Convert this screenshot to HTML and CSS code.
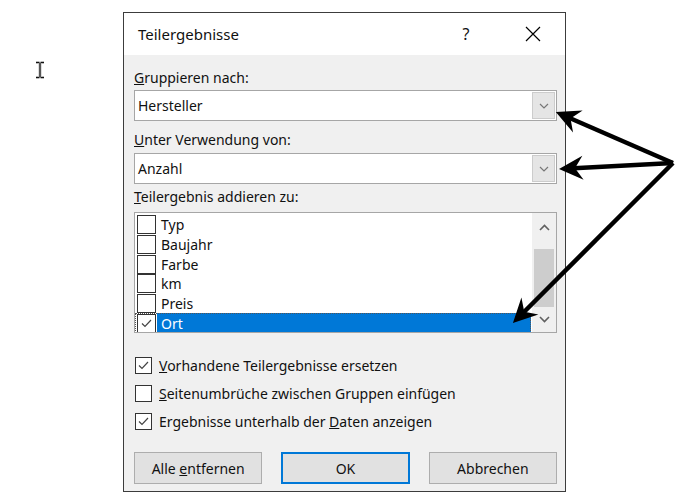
FILE: index.html
```html
<!DOCTYPE html>
<html lang="de">
<head>
    <meta charset="UTF-8">
    <title>Teilergebnisse</title>
    <link rel="stylesheet" href="styles.css">
</head>
<body>
<div class="page">
    <div class="dialog">
        <div class="titlebar">
            <span class="title">Teilergebnisse</span>
            <span class="help">?</span>
            <span class="close">
                <svg width="16" height="16" viewBox="0 0 16 16"><path d="M1 1 L15 15 M15 1 L1 15" stroke="#000" stroke-width="1.2" fill="none"/></svg>
            </span>
        </div>
        <div class="content">
            <div class="label first"><u>G</u>ruppieren nach:</div>
            <div class="combo">
                <span class="combo-text">Hersteller</span>
                <span class="dropbtn"><svg width="10" height="6" viewBox="0 0 10 6"><path d="M1 1 L5 5 L9 1" stroke="#777" stroke-width="1.2" fill="none"/></svg></span>
            </div>
            <div class="label"><u>U</u>nter Verwendung von:</div>
            <div class="combo second">
                <span class="combo-text">Anzahl</span>
                <span class="dropbtn"><svg width="10" height="6" viewBox="0 0 10 6"><path d="M1 1 L5 5 L9 1" stroke="#777" stroke-width="1.2" fill="none"/></svg></span>
            </div>
            <div class="label third"><u>T</u>eilergebnis addieren zu:</div>
            <div class="listbox">
                <div class="items">
                    <div class="item"><span class="box"></span><span class="item-text">Typ</span></div>
                    <div class="item"><span class="box"></span><span class="item-text">Baujahr</span></div>
                    <div class="item"><span class="box"></span><span class="item-text">Farbe</span></div>
                    <div class="item"><span class="box"></span><span class="item-text">km</span></div>
                    <div class="item"><span class="box"></span><span class="item-text">Preis</span></div>
                    <div class="item selected">
                        <span class="box"><svg width="15" height="15" viewBox="0 0 15 15"><path d="M3 7.5 L6 10.5 L12 4" stroke="#444" stroke-width="1.2" fill="none"/></svg></span>
                        <span class="item-text">Ort</span>
                    </div>
                </div>
                <div class="scrollbar">
                    <div class="sb-up"><svg width="11" height="7" viewBox="0 0 11 7"><path d="M1 6 L5.5 1.5 L10 6" stroke="#606060" stroke-width="1.6" fill="none"/></svg></div>
                    <div class="sb-track"><div class="sb-thumb"></div></div>
                    <div class="sb-down"><svg width="11" height="7" viewBox="0 0 11 7"><path d="M1 1 L5.5 5.5 L10 1" stroke="#606060" stroke-width="1.6" fill="none"/></svg></div>
                </div>
            </div>
            <div class="options">
                <div class="option">
                    <span class="box"><svg width="15" height="15" viewBox="0 0 15 15"><path d="M3 7.5 L6 10.5 L12 4" stroke="#444" stroke-width="1.2" fill="none"/></svg></span>
                    <span><u>V</u>orhandene Teilergebnisse ersetzen</span>
                </div>
                <div class="option">
                    <span class="box"></span>
                    <span><u>S</u>eitenumbrüche zwischen Gruppen einfügen</span>
                </div>
                <div class="option">
                    <span class="box"><svg width="15" height="15" viewBox="0 0 15 15"><path d="M3 7.5 L6 10.5 L12 4" stroke="#444" stroke-width="1.2" fill="none"/></svg></span>
                    <span>Ergebnisse unterhalb der <u>D</u>aten anzeigen</span>
                </div>
            </div>
            <div class="buttons">
                <button class="btn">Alle <u>e</u>ntfernen</button>
                <button class="btn default">OK</button>
                <button class="btn">Abbrechen</button>
            </div>
        </div>
    </div>

    <svg class="cursor" width="14" height="20" viewBox="0 0 14 20">
        <path d="M3 2.5 H6.5 M7.5 2.5 H11 M7 3 V17 M3 17.5 H6.5 M7.5 17.5 H11" stroke="#bbb" stroke-width="3" fill="none"/>
        <path d="M3 2.5 H6.5 M7.5 2.5 H11 M7 3 V17 M3 17.5 H6.5 M7.5 17.5 H11" stroke="#111" stroke-width="1.2" fill="none"/>
    </svg>

    <svg class="arrows" width="689" height="502" viewBox="0 0 689 502">
        <defs>
            <marker id="head" markerUnits="userSpaceOnUse" markerWidth="40" markerHeight="40" viewBox="-20 -20 40 40" refX="0" refY="0" orient="auto" overflow="visible">
                <path d="M10 0 L-14 -12 L-6 0 L-14 12 Z" fill="#000"/>
            </marker>
        </defs>
        <line x1="673" y1="163" x2="565" y2="116" stroke="#000" stroke-width="4.5" marker-end="url(#head)"/>
        <line x1="673" y1="163" x2="569" y2="168.5" stroke="#000" stroke-width="4.5" marker-end="url(#head)"/>
        <line x1="673" y1="163" x2="520" y2="316" stroke="#000" stroke-width="4.5" marker-end="url(#head)"/>
    </svg>
</div>
</body>
</html>
```

FILE: styles.css
```css
body{
    margin: 0;
    background-color: white;
    font-family: "Noto Sans", "Open Sans", sans-serif;
    font-size: 14px;
    color: #111;
}
.page{
    position: relative;
    width: 689px;
    height: 502px;
    padding: 12px 0 0 123px;
    box-sizing: border-box;
}
.dialog{
    width: 443px;
    border: 1px solid #3c3c3c;
    background-color: #f0f0f0;
    box-sizing: border-box;
}
.titlebar{
    display: flex;
    align-items: center;
    height: 42px;
    padding: 0 9px 0 14px;
    background-color: white;
}
.title{
    flex: 1;
    font-size: 15px;
}
.help{
    width: 46px;
    text-align: center;
    font-size: 16px;
}
.close{
    display: flex;
    justify-content: center;
    width: 46px;
    margin-left: 21px;
}
.content{
    padding: 13px 8px 7px 10px;
}
.label{
    height: 20px;
    line-height: 20px;
    margin-top: 9px;
}
.label.first{
    margin-top: 0;
}
.label.third{
    margin-top: 3px;
}
.combo{
    display: flex;
    align-items: center;
    height: 31px;
    margin-top: 2px;
    padding: 1px;
    border: 1px solid #a6a6a6;
    background-color: white;
    box-sizing: border-box;
}
.combo.second{
    margin-top: 3px;
}
.combo-text{
    flex: 1;
    padding-left: 2px;
}
.dropbtn{
    display: flex;
    align-items: center;
    justify-content: center;
    width: 23px;
    height: 100%;
    border: 1px solid #cccccc;
    background-color: #e5e5e5;
    box-sizing: border-box;
}
.listbox{
    display: flex;
    height: 121px;
    margin-top: 5px;
    border: 1px solid #a6a6a6;
    background-color: white;
    box-sizing: border-box;
    overflow: hidden;
}
.items{
    flex: 1;
    padding-top: 2px;
}
.item{
    display: flex;
    align-items: center;
    height: 19.7px;
    padding-left: 2px;
}
.box{
    display: flex;
    align-items: center;
    justify-content: center;
    width: 17px;
    height: 17px;
    border: 1px solid #333333;
    background-color: white;
    box-sizing: border-box;
}
.item .box{
    width: 19px;
    height: 19px;
}
.item-text{
    display: flex;
    align-items: center;
    flex: 1;
    height: 100%;
    margin-left: 1px;
    padding-left: 4px;
}
.item.selected{
    outline: 1px dotted #555;
    outline-offset: -1px;
    margin-right: 1px;
}
.item.selected .item-text{
    background-color: #0078d7;
    color: white;
}
.scrollbar{
    display: flex;
    flex-direction: column;
    width: 24px;
    background-color: #f0f0f0;
}
.sb-up{
    display: flex;
    align-items: center;
    justify-content: center;
    height: 28px;
}
.sb-track{
    flex: 1;
    padding: 8px 2px 0 2px;
}
.sb-thumb{
    height: 58px;
    background-color: #cdcdcd;
}
.sb-down{
    display: flex;
    align-items: center;
    justify-content: center;
    height: 25px;
}
.options{
    margin-top: 18px;
}
.option{
    display: flex;
    align-items: center;
    height: 28px;
}
.option .box{
    margin: 0 7px 0 1px;
}
.buttons{
    display: grid;
    grid-template-columns: 1fr 1fr 1fr;
    gap: 19px;
    margin-top: 17px;
}
.btn{
    height: 32px;
    font-family: inherit;
    font-size: 14px;
    color: #111;
    background-color: #e1e1e1;
    border: 1px solid #adadad;
}
.btn.default{
    border: 2px solid #0078d7;
}
.cursor{
    position: absolute;
    left: 33px;
    top: 60px;
}
.arrows{
    position: absolute;
    left: 0;
    top: 0;
    pointer-events: none;
}
```
